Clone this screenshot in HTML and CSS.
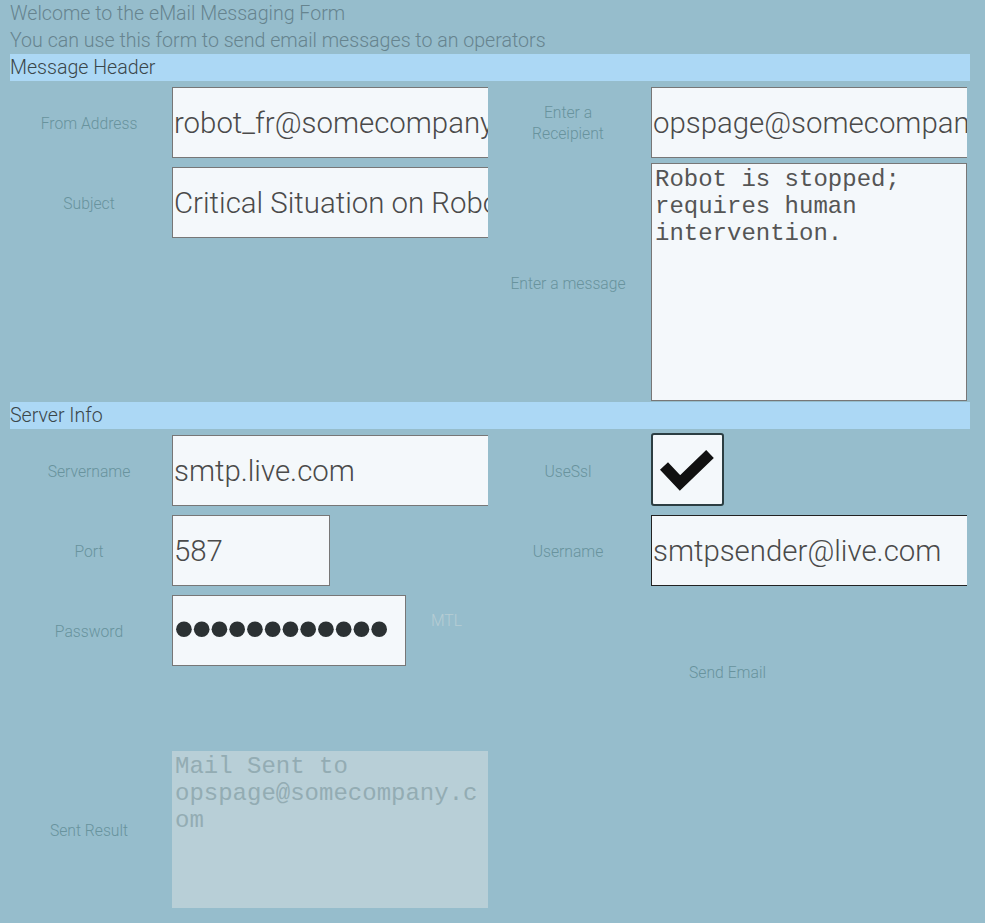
FILE: index.html
```html
<!DOCTYPE html>
<html lang="en">
<head>
<meta charset="utf-8">
<title>eMail Messaging Form</title>
<link rel="stylesheet" href="styles.css">
</head>
<body>
<main class="page">
  <p class="intro">Welcome to the eMail Messaging Form</p>
  <p class="intro">You can use this form to send email messages to an operators</p>

  <div class="bar">Message Header</div>
  <section class="grid grid-msg">
    <label class="lbl lbl-left">From Address</label>
    <div class="fld"><input class="txt txt-wide" type="text" value="robot_fr@somecompany.com"></div>
    <label class="lbl lbl-mid lbl-two"><span class="wrap">Enter a Receipient</span></label>
    <div class="fld"><input class="txt txt-wide" type="text" value="opspage@somecompany.com"></div>

    <label class="lbl lbl-left">Subject</label>
    <div class="fld"><input class="txt txt-wide" type="text" value="Critical Situation on Robot 3"></div>
    <label class="lbl lbl-mid lbl-tall">Enter a message</label>
    <textarea class="mono msg">Robot is stopped; requires human intervention.</textarea>
  </section>

  <div class="bar bar-second">Server Info</div>
  <section class="grid grid-srv">
    <label class="lbl lbl-left">Servername</label>
    <div class="fld"><input class="txt txt-wide" type="text" value="smtp.live.com"></div>
    <label class="lbl lbl-mid">UseSsl</label>
    <div class="cell-check">
      <span class="check" role="checkbox" aria-checked="true">
        <svg viewBox="0 0 69 69" width="69" height="69" aria-hidden="true"><polyline points="11,31 27,48 57,19" fill="none" stroke="#111" stroke-width="11" stroke-linejoin="miter" stroke-linecap="butt"/></svg>
      </span>
    </div>

    <label class="lbl lbl-left">Port</label>
    <div class="fld"><input class="txt txt-port" type="text" value="587"></div>
    <label class="lbl lbl-mid">Username</label>
    <div class="fld"><input class="txt txt-wide txt-dark" type="text" value="smtpsender@live.com"></div>

    <label class="lbl lbl-left">Password</label>
    <div class="fld fld-pw">
      <input class="txt txt-pw" type="password" value="secretpasswd">
      <span class="mtl">MTL</span>
    </div>
    <button class="send" type="button">Send Email</button>

    <label class="lbl lbl-left lbl-result">Sent Result</label>
    <textarea class="mono result" readonly>Mail Sent to opspage@somecompany.com</textarea>
  </section>
</main>
</body>
</html>
```

FILE: styles.css
```css
html, body {
  margin: 0;
  padding: 0;
  background: #96bdcc;
}

body {
  font-family: Roboto, "Liberation Sans", sans-serif;
  font-weight: 300;
  min-height: 923px;
}

.page {
  padding: 0 15px 0 10px;
}

.intro {
  margin: 0;
  font-size: 19.6px;
  line-height: 27px;
  color: #66848f;
}

.bar {
  width: 960px;
  height: 27px;
  line-height: 27px;
  background: #acd8f5;
  color: #3a464a;
  font-size: 19.6px;
}

.bar-second {
  margin-top: 1px;
}

.grid {
  display: grid;
  grid-template-columns: 162px 316px 163px 316px;
}

.grid-msg {
  grid-template-rows: repeat(4, 80px);
}

.grid-srv {
  grid-template-rows: 80px 80px 80px 80px 160px;
}

.lbl {
  margin-top: 7px;
  height: 71px;
  display: flex;
  align-items: center;
  justify-content: center;
  text-align: center;
  font-size: 15.7px;
  line-height: 21px;
  color: #68939d;
}

.lbl-left {
  grid-column: 1;
  padding-right: 4px;
}

.lbl-mid {
  grid-column: 3;
  padding-right: 3px;
}

.lbl-two {
  margin-top: 6px;
}

.wrap {
  max-width: 118px;
}

.lbl-tall {
  grid-row: 2 / 5;
  margin-top: 3px;
  height: 238px;
}

.fld {
  margin-top: 6px;
  height: 71px;
  overflow: hidden;
}

.txt {
  box-sizing: border-box;
  height: 71px;
  margin: 0;
  padding: 0 0 0 1px;
  border: 1px solid #777;
  border-radius: 0;
  background: #f4f8fb;
  color: #4a4a4a;
  font-family: Roboto, "Liberation Sans", sans-serif;
  font-weight: 300;
  font-size: 29.4px;
  outline: none;
}

.txt-wide {
  width: 420px;
}

.txt-dark {
  border-color: #222;
}

.txt-port {
  width: 158px;
}

.fld-pw {
  display: flex;
  align-items: flex-start;
  overflow: visible;
}

.txt-pw {
  width: 234px;
  flex: none;
  color: #2b3133;
  font-family: "DejaVu Sans", sans-serif;
  font-weight: 400;
  font-size: 54px;
  letter-spacing: -14.1px;
  padding-left: 0;
  text-indent: -5px;
}

.mtl {
  margin-left: 25px;
  margin-top: 16px;
  font-size: 15.7px;
  line-height: 19px;
  color: #b6cdd4;
}

.mono {
  box-sizing: border-box;
  margin: 0;
  resize: none;
  overflow: hidden;
  font-family: "Liberation Mono", "Courier New", monospace;
  font-size: 24px;
  line-height: 27px;
  outline: none;
}

.msg {
  grid-column: 4;
  grid-row: 2 / 5;
  margin-top: 2px;
  width: 316px;
  height: 238px;
  padding: 2px 3px;
  border: 1px solid #777;
  border-radius: 0;
  background: #f4f8fb;
  color: #555;
}

.cell-check {
  grid-column: 4;
  padding-top: 4px;
}

.check {
  box-sizing: border-box;
  display: block;
  width: 73px;
  height: 73px;
  border: 2px solid #2c3e42;
  border-radius: 3px;
  background: #f4f8fb;
}

.check svg {
  display: block;
}

.send {
  grid-column: 3 / 5;
  grid-row: 3 / 5;
  align-self: center;
  justify-self: center;
  margin-top: 6px;
  padding: 0;
  border: 0;
  background: transparent;
  font-family: Roboto, "Liberation Sans", sans-serif;
  font-weight: 300;
  font-size: 15.7px;
  line-height: 19px;
  color: #68939d;
}

.lbl-result {
  grid-row: 5;
  margin-top: 3px;
  height: 157px;
}

.result {
  grid-column: 2;
  grid-row: 5;
  margin-top: 2px;
  width: 316px;
  height: 157px;
  padding: 2px 3px;
  border: 0;
  background: #b8cfd7;
  color: #93acb3;
}
```
